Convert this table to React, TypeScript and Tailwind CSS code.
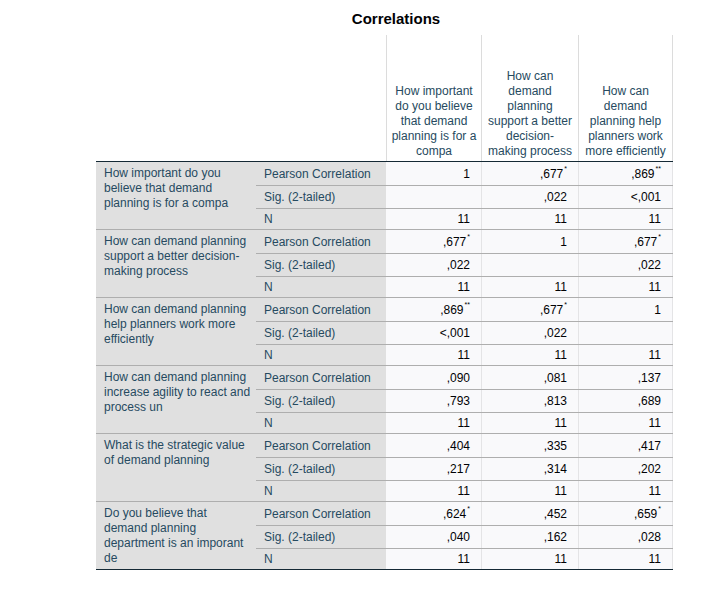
import React from "react";

type Val = { v: string; sig?: string };

interface Group {
  label: string;
  rows: Val[][];
}

const n11: Val[] = [{ v: "11" }, { v: "11" }, { v: "11" }];

// header lines broken the way SPSS wraps them
const headers = [
  ["How important", "do you believe", "that demand", "planning is for a", "compa"],
  ["How can", "demand", "planning", "support a better", "decision-", "making process"],
  ["How can", "demand", "planning help", "planners work", "more efficiently"],
];

const colWidths = ["w-[95px]", "w-[97px]", "w-[95px]"];

const groups: Group[] = [
  {
    label: "How important do you believe that demand planning is for a compa",
    rows: [
      [{ v: "1" }, { v: ",677", sig: "*" }, { v: ",869", sig: "**" }],
      [{ v: "" }, { v: ",022" }, { v: "<,001" }],
      n11,
    ],
  },
  {
    label: "How can demand planning support a better decision-making process",
    rows: [
      [{ v: ",677", sig: "*" }, { v: "1" }, { v: ",677", sig: "*" }],
      [{ v: ",022" }, { v: "" }, { v: ",022" }],
      n11,
    ],
  },
  {
    label: "How can demand planning help planners work more efficiently",
    rows: [
      [{ v: ",869", sig: "**" }, { v: ",677", sig: "*" }, { v: "1" }],
      [{ v: "<,001" }, { v: ",022" }, { v: "" }],
      n11,
    ],
  },
  {
    label: "How can demand planning increase agility to react and process un",
    rows: [
      [{ v: ",090" }, { v: ",081" }, { v: ",137" }],
      [{ v: ",793" }, { v: ",813" }, { v: ",689" }],
      n11,
    ],
  },
  {
    label: "What is the strategic value of demand planning",
    rows: [
      [{ v: ",404" }, { v: ",335" }, { v: ",417" }],
      [{ v: ",217" }, { v: ",314" }, { v: ",202" }],
      n11,
    ],
  },
  {
    label: "Do you believe that demand planning department is an imporant de",
    rows: [
      [{ v: ",624", sig: "*" }, { v: ",452" }, { v: ",659", sig: "*" }],
      [{ v: ",040" }, { v: ",162" }, { v: ",028" }],
      n11,
    ],
  },
];

const stats = ["Pearson Correlation", "Sig. (2-tailed)", "N"];
const rowHeights = ["h-[24px] border-b", "h-[23px] border-b", "h-[20px]"];

function DataCell({ val, idx }: { val: Val; idx: number }) {
  const edge =
    idx === 0
      ? ""
      : idx === 1
        ? "border-l border-[#e4e4e6]"
        : "border-l border-r border-[#e4e4e6]";
  return (
    <div
      className={`flex items-center justify-end bg-[#f9f9fb] pr-[11px] text-[#010205] ${colWidths[idx]} ${edge}`}
    >
      <span>{val.v}</span>
      {val.sig && (
        <sup className="top-[-5px] ml-[1px] text-[7px] leading-none">
          {val.sig}
        </sup>
      )}
    </div>
  );
}

export default function App() {
  return (
    <div className="min-h-[591px] bg-white font-['Liberation_Sans',Arial,sans-serif] text-[12px]">
      {/* Title */}
      <div className="ml-[96px] w-[600px] pt-[10px] text-center text-[15px] font-bold leading-[17px] text-[#010205]">
        Correlations
      </div>

      <div className="ml-[96px] mt-[8px] w-[577px]">
        {/* Column headers */}
        <div className="flex h-[126px]">
          <div className="w-[290px]" />
          {headers.map((lines, i) => (
            <div
              key={i}
              className={`flex flex-col items-center justify-end whitespace-nowrap border-l border-[#dcdcdc] pb-[2px] text-center leading-[15px] text-[#264a60] ${colWidths[i]} ${i === 2 ? "border-r" : ""}`}
            >
              {lines.map((l) => (
                <span key={l}>{l}</span>
              ))}
            </div>
          ))}
        </div>

        {/* Body */}
        <div className="border-t border-[#152935]">
          {groups.map((g, gi) => (
            <div
              key={g.label}
              className={`flex border-b ${gi === groups.length - 1 ? "border-[#152935]" : "border-[#aeaeae]"}`}
            >
              <div className="w-[160px] bg-[#e0e0e0] pl-2 pr-[4px] pt-[4px] leading-[15px] text-[#264a60]">
                {g.label}
              </div>
              <div className="flex w-[417px] flex-col">
                {g.rows.map((r, ri) => (
                  <div
                    key={ri}
                    className={`flex border-[#aeaeae] ${rowHeights[ri]}`}
                  >
                    <div className="flex w-[130px] items-center bg-[#e0e0e0] pl-2 text-[#264a60]">
                      {stats[ri]}
                    </div>
                    {r.map((val, ci) => (
                      <DataCell key={ci} val={val} idx={ci} />
                    ))}
                  </div>
                ))}
              </div>
            </div>
          ))}
        </div>
      </div>
    </div>
  );
}
